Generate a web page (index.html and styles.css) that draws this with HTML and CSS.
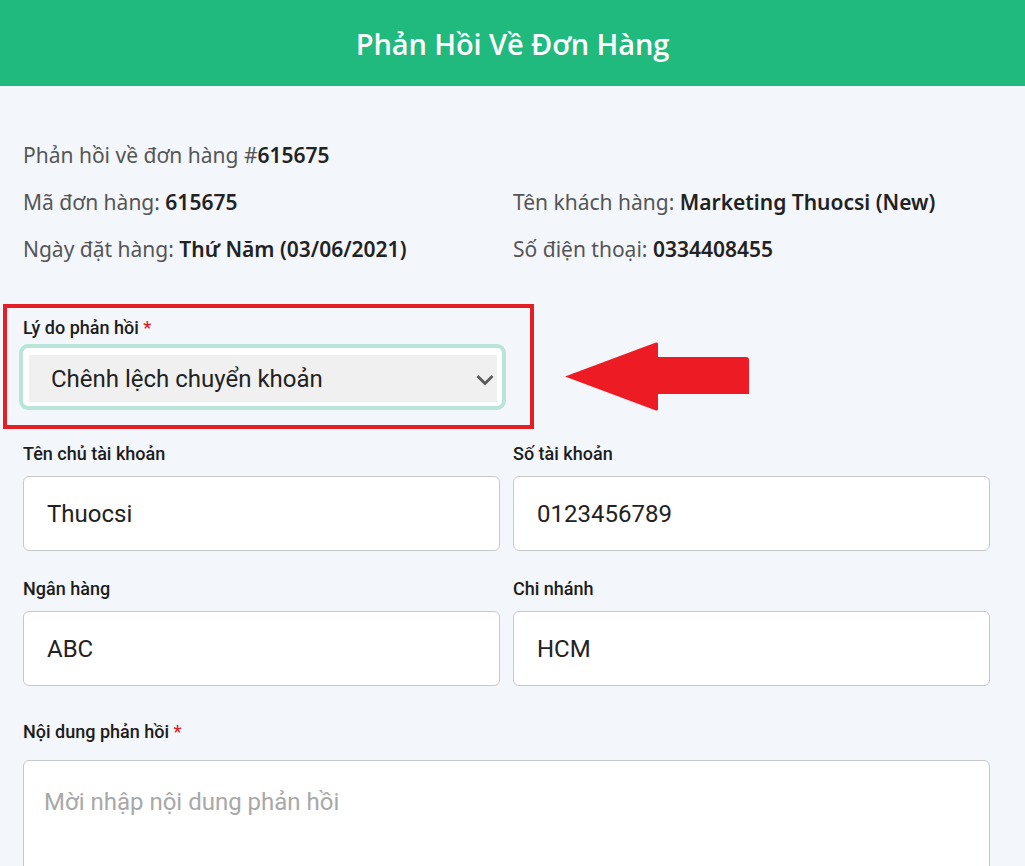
FILE: index.html
```html
<!DOCTYPE html>
<html lang="vi">
<head>
<meta charset="utf-8">
<title>Phản Hồi Về Đơn Hàng</title>
<link rel="stylesheet" href="styles.css">
</head>
<body>
<header class="topbar">
  <h1 class="topbar-title">Phản Hồi Về Đơn Hàng</h1>
</header>
<main class="page">
  <section class="info">
    <div class="info-row info-full">Phản hồi về đơn hàng #<b>615675</b></div>
    <div class="info-row">Mã đơn hàng: <b>615675</b></div>
    <div class="info-row">Tên khách hàng: <b>Marketing Thuocsi (New)</b></div>
    <div class="info-row">Ngày đặt hàng: <b>Thứ Năm (03/06/2021)</b></div>
    <div class="info-row">Số điện thoại: <b>0334408455</b></div>
  </section>

  <div class="reason-row">
    <div class="highlight-box">
      <label class="field-label">Lý do phản hồi <span class="req">*</span></label>
      <div class="select-outer">
        <div class="select-inner">
          <span class="select-value">Chênh lệch chuyển khoản</span>
          <svg class="chevron" width="20" height="12" viewBox="0 0 20 12"><path d="M2.5 2 L10 9.5 L17.5 2" fill="none" stroke="#5a5a5a" stroke-width="2.8"/></svg>
        </div>
      </div>
    </div>
    <svg class="arrow" width="186" height="71" viewBox="0 0 186 71">
      <path d="M1 35.5 L92 1.5 Q94 1 94 3 L94 16 L182 16 Q185 16 185 19 L185 53 L94 53 L94 68 Q94 70 92 69.5 Z" fill="#ed1c24"/>
    </svg>
  </div>

  <section class="grid">
    <div class="field">
      <label class="field-label">Tên chủ tài khoản</label>
      <div class="input">Thuocsi</div>
    </div>
    <div class="field">
      <label class="field-label">Số tài khoản</label>
      <div class="input">0123456789</div>
    </div>
    <div class="field">
      <label class="field-label">Ngân hàng</label>
      <div class="input">ABC</div>
    </div>
    <div class="field">
      <label class="field-label">Chi nhánh</label>
      <div class="input">HCM</div>
    </div>
  </section>

  <section class="content-field">
    <label class="field-label">Nội dung phản hồi <span class="req">*</span></label>
    <div class="textarea"><span class="placeholder">Mời nhập nội dung phản hồi</span></div>
  </section>
</main>
</body>
</html>
```

FILE: styles.css
```css
* { box-sizing: border-box; }
html, body { margin: 0; padding: 0; }
body {
  background: #f3f6fa;
  font-family: "Noto Sans", "Open Sans", sans-serif;
  color: #222;
  height: 866px;
  overflow: hidden;
}
.topbar {
  height: 86px;
  background: #20b97e;
  display: flex;
  align-items: center;
  justify-content: center;
}
.topbar-title {
  margin: 0;
  color: #fff;
  font-family: "Open Sans", sans-serif;
  font-weight: 600;
  font-size: 29px;
  letter-spacing: -0.1px;
}
.page {
  padding: 46px 35px 0 23px;
}
.info {
  display: grid;
  grid-template-columns: 1fr 1fr;
  column-gap: 13px;
  font-size: 21px;
  line-height: 47px;
  color: #555;
}
.info b { color: #222; font-weight: 600; }
.info-full { grid-column: 1 / 3; }
.reason-row {
  display: flex;
  align-items: flex-start;
  margin-top: 31px;
  margin-left: -20px;
}
.highlight-box {
  width: 531px;
  height: 125px;
  border: 4px solid #e51d25;
  padding: 10px 24px 0 16px;
}
.field-label {
  display: block;
  font-family: Roboto, sans-serif;
  font-weight: 500;
  font-size: 18px;
  line-height: 20px;
  color: #1c1c1c;
}
.req { color: #e02020; }
.select-outer {
  margin: 6px 0 0 -4px;
  height: 66px;
  border: 4px solid #b8e5d7;
  border-radius: 9px;
  background: #fff;
  padding: 7px 5px 4px 6px;
}
.select-inner {
  height: 47px;
  background: #f0f0f0;
  display: flex;
  align-items: center;
  justify-content: space-between;
  padding: 0 2px 0 22px;
}
.select-value {
  font-family: Roboto, sans-serif;
  font-size: 24px;
  color: #222;
}
.chevron { margin-top: 2px; }
.arrow {
  margin-left: 30px;
  margin-top: 37px;
}
.grid {
  display: grid;
  grid-template-columns: 1fr 1fr;
  column-gap: 13px;
  row-gap: 28px;
  margin-top: 15px;
}
.field .field-label { margin-bottom: 12px; }
.input {
  height: 75px;
  background: #fff;
  border: 1px solid #c8c8c8;
  border-radius: 6px;
  display: flex;
  align-items: center;
  padding-left: 23px;
  font-family: Roboto, sans-serif;
  font-size: 24px;
  color: #222;
}
.content-field { margin-top: 36px; }
.content-field .field-label { margin-bottom: 18px; }
.textarea {
  height: 140px;
  background: #fff;
  border: 1px solid #c8c8c8;
  border-radius: 6px;
  padding: 27px 20px;
  font-family: Roboto, sans-serif;
  font-size: 24px;
  line-height: 28px;
}
.placeholder { color: #a8a8a8; }
```
